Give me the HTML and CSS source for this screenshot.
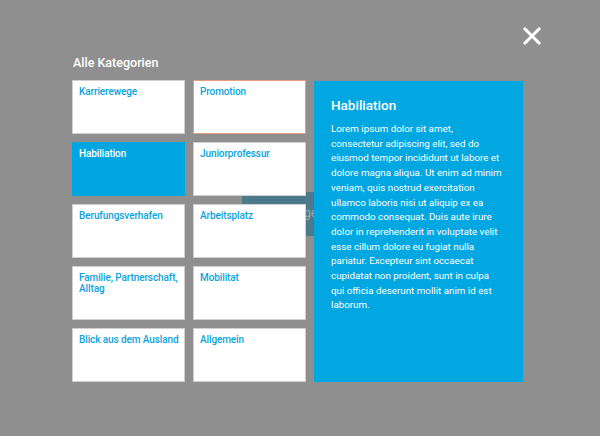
FILE: index.html
```html
<!DOCTYPE html>
<html lang="de">
<head>
<meta charset="utf-8">
<title>Alle Kategorien</title>
<link rel="stylesheet" href="styles.css">
</head>
<body>
<div class="behind"><span>ge</span></div>
<button class="close" aria-label="Schließen">
  <svg width="20" height="20" viewBox="0 0 20 20"><path d="M2 2 L18 18 M18 2 L2 18" stroke="#fff" stroke-width="3" stroke-linecap="butt"/></svg>
</button>
<main class="modal">
  <h1 class="title">Alle Kategorien</h1>
  <div class="content">
    <div class="grid">
      <a class="card">Karrierewege</a>
      <a class="card card-hover">Promotion</a>
      <a class="card card-active">Habiliation</a>
      <a class="card">Juniorprofessur</a>
      <a class="card">Berufungsverhafen</a>
      <a class="card">Arbeitsplatz</a>
      <a class="card">Familie, Partnerschaft, Alltag</a>
      <a class="card">Mobilitat</a>
      <a class="card">Blick aus dem Ausland</a>
      <a class="card">Allgemein</a>
    </div>
    <section class="panel">
      <h2 class="panel-title">Habiliation</h2>
      <p class="panel-text">Lorem ipsum dolor sit amet, consectetur adipiscing elit, sed do eiusmod tempor incididunt ut labore et dolore magna aliqua. Ut enim ad minim veniam, quis nostrud exercitation ullamco laboris nisi ut aliquip ex ea commodo consequat. Duis aute irure dolor in reprehenderit in voluptate velit esse cillum dolore eu fugiat nulla pariatur. Excepteur sint occaecat cupidatat non proident, sunt in culpa qui officia deserunt mollit anim id est laborum.</p>
    </section>
  </div>
</main>
</body>
</html>
```
FILE: styles.css
```css
* { box-sizing: border-box; }
html, body { margin: 0; padding: 0; }
body {
  width: 600px;
  height: 436px;
  background: #8f8f8f;
  font-family: Roboto, "Liberation Sans", sans-serif;
  overflow: hidden;
  position: relative;
}
.behind {
  position: absolute;
  left: 242px;
  top: 192px;
  width: 120px;
  height: 44px;
  background: #4b7a8b;
  color: #a8a8a8;
  font-size: 12px;
  padding: 14px 0 0 62px;
}
.close {
  position: absolute;
  left: 522px;
  top: 26px;
  width: 20px;
  height: 20px;
  padding: 0;
  border: 0;
  background: none;
  display: block;
}
.close svg { display: block; }
.modal {
  position: relative;
  padding: 55px 0 0 72px;
}
.title {
  margin: 0 0 9px 1px;
  font-size: 12.5px;
  line-height: 16px;
  font-weight: 500;
  color: #fff;
}
.content {
  display: flex;
  gap: 8px;
}
.grid {
  display: grid;
  grid-template-columns: 113px 113px;
  grid-auto-rows: 54px;
  gap: 8px;
}
.card {
  display: block;
  background: #fff;
  border: 1px solid #cfcfcf;
  padding: 5px 2px 0 6px;
  font-size: 10px;
  line-height: 11px;
  font-weight: 500;
  letter-spacing: -0.1px;
  color: #0aa3dc;
}
.card-hover { border-color: #e69a80; }
.card-active { background: #00a6df; border-color: #00a6df; color: #fff; }
.panel {
  width: 209px;
  height: 301px;
  margin-top: 1px;
  background: #00a7e0;
  color: #fff;
  padding: 15px 19px 0 17px;
}
.panel-title {
  margin: 0 0 8px 0;
  font-size: 13.5px;
  line-height: 18px;
  font-weight: 500;
}
.panel-text {
  margin: 0;
  font-size: 9.8px;
  line-height: 14.7px;
}
```
